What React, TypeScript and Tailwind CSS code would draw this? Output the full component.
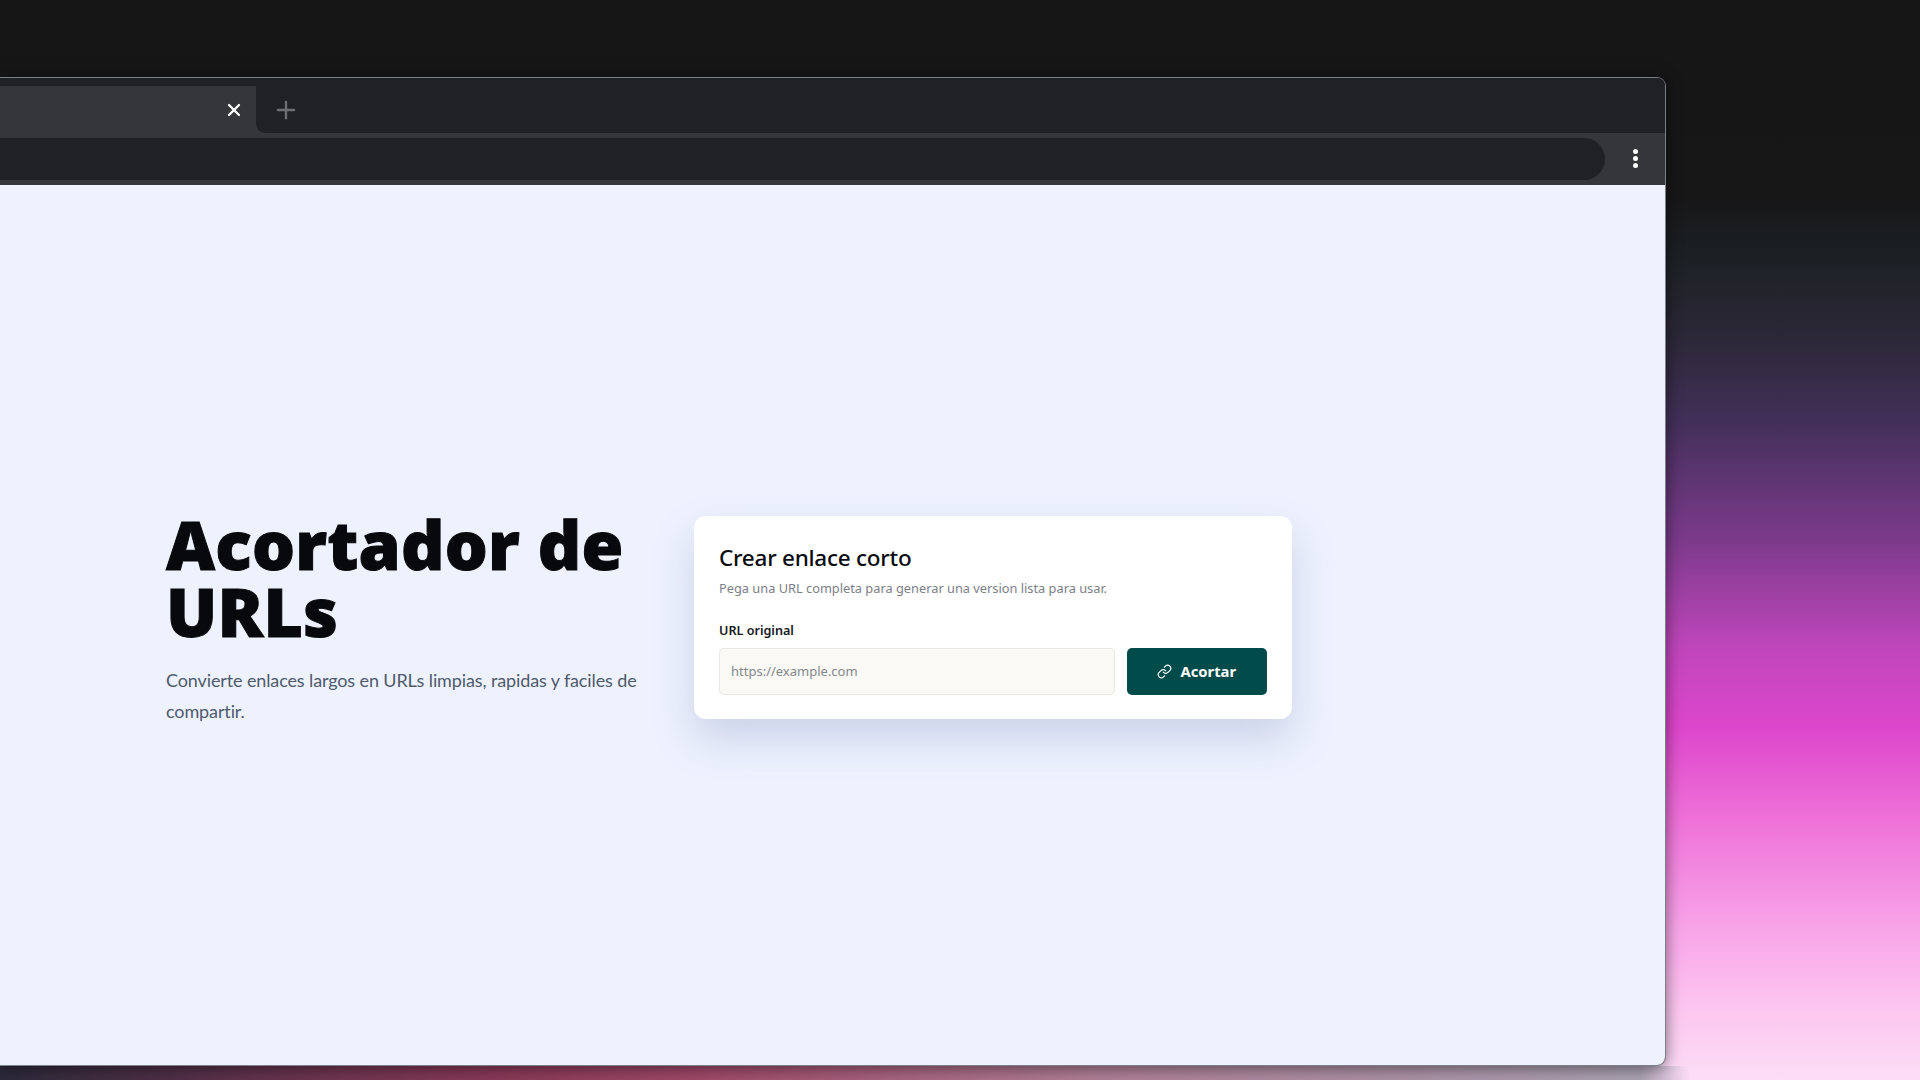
import { Link, X, Plus } from "lucide-react";

export default function App() {
  return (
    <div className="h-[1080px] w-[1920px] overflow-hidden flex flex-col items-start bg-[linear-gradient(180deg,#161616_0px,#171718_200px,#1c2024_256px,#2c2838_340px,#43305a_424px,#7a3a8a_537px,#c046bc_649px,#dd46cc_727px,#ee70d8_817px,#f8a5e8_930px,#fcc8f0_1013px,#fcdcf6_1075px)] font-['Noto_Sans',sans-serif]">
      <div className="mt-[77px] h-[989px] w-[1666px] shrink-0 rounded-r-[9px] border-y border-r border-[#7d7f86] bg-[#202124] overflow-hidden flex flex-col relative z-10 shadow-[0_2px_16px_rgba(0,0,0,0.5)]">
        <div className="h-[55px] shrink-0 flex bg-[#35363a]">
          <div className="w-[256px] shrink-0 flex flex-col">
            <div className="h-[8px] bg-[#202124]"></div>
            <div className="flex-1 rounded-tr-[9px] flex items-center justify-end pr-[12px] relative">
              <X className="size-[20px] text-white" strokeWidth={2.7} />
            </div>
          </div>
          <div className="flex-1 rounded-bl-[9px] bg-[#202124] flex items-center pl-[16px] pt-[8px]">
            <Plus className="size-[28px] text-[#6e6f74]" strokeWidth={2} />
          </div>
        </div>
        <div className="h-[52px] shrink-0 bg-[#35363a] flex items-start pt-[5px]">
          <div className="h-[42px] w-[1605px] rounded-r-[21px] bg-[#202124]"></div>
          <div className="flex flex-col gap-[2.5px] items-center ml-[28px] mt-[11px]">
            <span className="size-[4.5px] rounded-full bg-white"></span>
            <span className="size-[4.5px] rounded-full bg-white"></span>
            <span className="size-[4.5px] rounded-full bg-white"></span>
          </div>
        </div>
        <main className="flex-1 bg-[#eef2fe] flex items-center pl-[166px] pb-[16px] gap-[48px]">
          <section className="w-[480px] shrink-0 pt-[3px]">
            <h1 className="text-[67.7px] leading-[67px] font-black text-[#08090c] tracking-[0.2px] [-webkit-text-stroke:1px_#08090c]">Acortador de URLs</h1>
            <p className="mt-[20px] text-[18px] leading-[31px] tracking-[-0.12px] text-[#4e5a6c] font-['Lato',sans-serif]">Convierte enlaces largos en URLs limpias, rapidas y faciles de compartir.</p>
          </section>
          <section className="w-[598px] h-[203px] shrink-0 rounded-[12px] bg-white p-[25px] shadow-[0_20px_40px_rgba(100,120,170,0.25)]">
            <h2 className="mt-[1px] text-[22.5px] leading-[32px] font-medium tracking-[-0.25px] text-[#0a0c10]">Crear enlace corto</h2>
            <p className="mt-[4px] text-[12.8px] leading-[20px] text-[#7c8087]">Pega una URL completa para generar una version lista para usar.</p>
            <label className="block mt-[23px] text-[12.6px] leading-[20px] font-semibold text-[#14171c]">URL original</label>
            <div className="mt-[7px] flex gap-[12px]">
              <div className="w-[397px] h-[47px] rounded-[5px] border border-[#e7e7e4] bg-[#faf9f6] pl-[11px] pt-[2px] flex items-center text-[13px] text-[#85888c]">https://example.com</div>
              <button className="w-[141px] h-[47px] rounded-[5px] bg-[#024b4b] text-white flex items-center justify-center gap-[8px] text-[14.8px] font-bold">
                <Link className="size-[15px]" strokeWidth={1.8} />
                Acortar
              </button>
            </div>
          </section>
        </main>
      </div>
      <div className="h-[14px] w-[1690px] shrink-0 bg-[linear-gradient(90deg,#2c2a3a_0px,#6a3450_300px,#8a3a58_500px,#a04a68_700px,#b08098_1100px,#aba2b3_1640px,#fcdcf6_1690px)]"></div>
    </div>
  );
}
